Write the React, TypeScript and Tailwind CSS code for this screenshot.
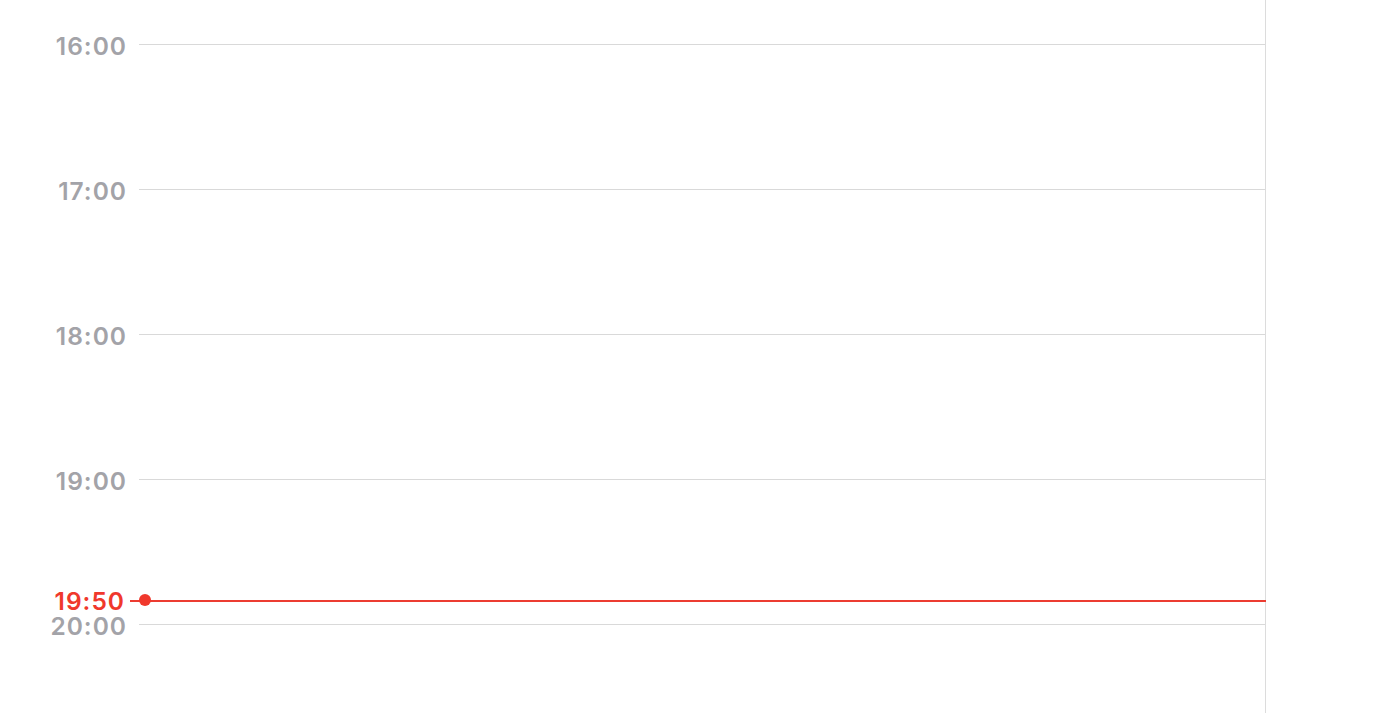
export default function App() {
  const hours = ["16:00", "17:00", "18:00", "19:00", "20:00"];
  return (
    <div
      className="relative h-[713px] w-full overflow-hidden bg-white"
      style={{ fontFamily: "Inter, 'Noto Sans', sans-serif" }}
    >
      <div className="flex h-full">
        <div className="flex h-full w-[1266px] flex-col gap-[121px] border-r border-[#dcdcdc] pt-[32px]">
          {hours.map((h) => (
            <div key={h} className="flex h-[24px] items-center">
              <div className="mt-[5px] w-[139px] pr-[12px] text-right text-[24.5px] font-semibold leading-none tracking-[1px] text-[#a3a3a8]">
                {h}
              </div>
              <div className="h-px flex-1 bg-[#d9d9d9]" />
            </div>
          ))}
        </div>
        <div className="flex-1" />
      </div>
      <div className="absolute left-0 top-[589px] flex h-[24px] w-[1266px] items-center">
        <div className="mt-[1px] w-[130px] pr-[5px] text-right text-[24.5px] font-semibold leading-none tracking-[1px] text-[#f0382c]">
          19:50
        </div>
        <div className="relative flex h-[24px] flex-1 items-center">
          <div className="h-[2px] w-full bg-[#ec3c31]" />
          <div className="absolute left-[9px] top-[5px] h-[12px] w-[12px] rounded-full bg-[#f0382c]" />
        </div>
      </div>
    </div>
  );
}
